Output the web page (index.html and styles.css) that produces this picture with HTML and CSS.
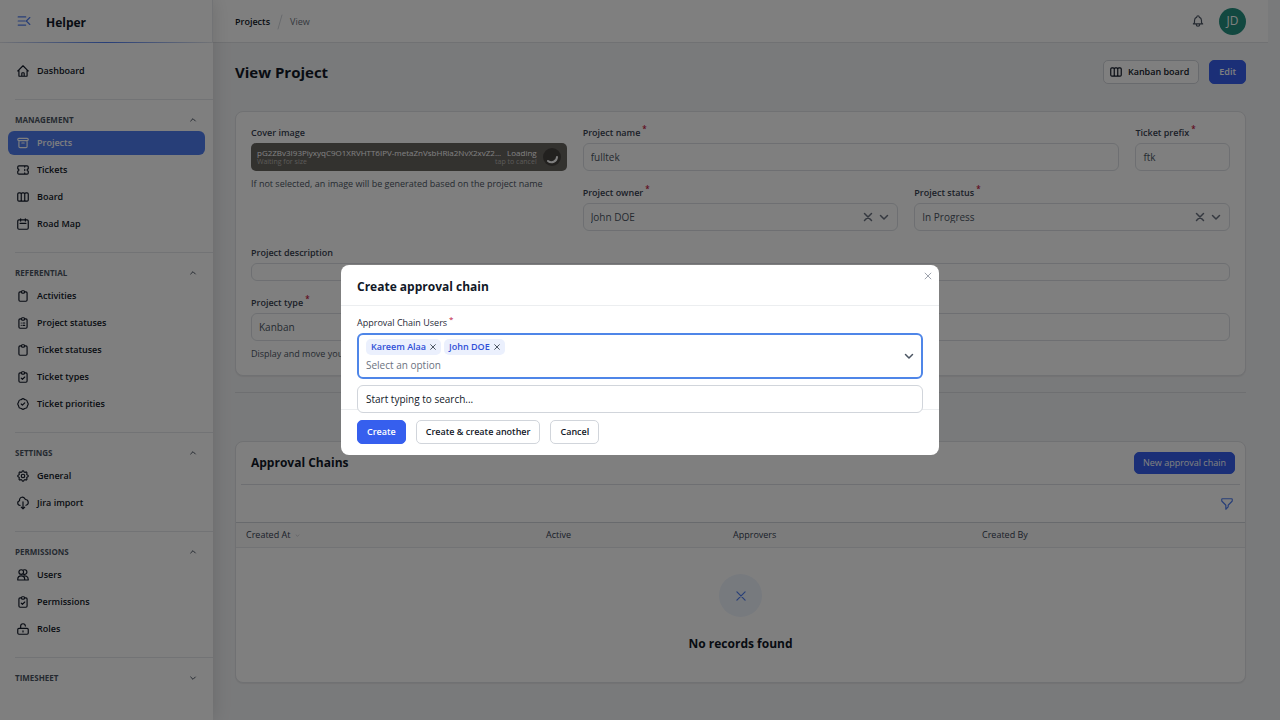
FILE: index.html
```html
<!DOCTYPE html>
<html lang="en">
<head>
<meta charset="utf-8">
<title>View Project - Helper</title>
<link rel="stylesheet" href="styles.css">
</head>
<body>
<svg class="sprite" aria-hidden="true">
  <symbol id="home" viewBox="0 0 24 24"><path d="M3 12l2-2m0 0l7-7 7 7M5 10v10a1 1 0 001 1h3m10-11l2 2m-2-2v10a1 1 0 01-1 1h-3m-6 0a1 1 0 001-1v-4a1 1 0 011-1h2a1 1 0 011 1v4a1 1 0 001 1m-6 0h6"/></symbol>
  <symbol id="archive" viewBox="0 0 24 24"><path d="M5 8h14M5 8a2 2 0 110-4h14a2 2 0 110 4M5 8v10a2 2 0 002 2h10a2 2 0 002-2V8m-9 4h4"/></symbol>
  <symbol id="ticket" viewBox="0 0 24 24"><path d="M15 5v2m0 4v2m0 4v2M5 5a2 2 0 00-2 2v3a2 2 0 110 4v3a2 2 0 002 2h14a2 2 0 002-2v-3a2 2 0 110-4V7a2 2 0 00-2-2H5z"/></symbol>
  <symbol id="board" viewBox="0 0 24 24"><path d="M9 17V7m0 10a2 2 0 01-2 2H5a2 2 0 01-2-2V7a2 2 0 012-2h2a2 2 0 012 2m0 10a2 2 0 002 2h2a2 2 0 002-2M9 7a2 2 0 012-2h2a2 2 0 012 2m0 10V7m0 10a2 2 0 002 2h2a2 2 0 002-2V7a2 2 0 00-2-2h-2a2 2 0 00-2 2"/></symbol>
  <symbol id="calendar" viewBox="0 0 24 24"><path d="M8 7V3m8 4V3m-9 8h10M5 21h14a2 2 0 002-2V7a2 2 0 00-2-2H5a2 2 0 00-2 2v12a2 2 0 002 2z"/></symbol>
  <symbol id="clip" viewBox="0 0 24 24"><path d="M9 5H7a2 2 0 00-2 2v12a2 2 0 002 2h10a2 2 0 002-2V7a2 2 0 00-2-2h-2M9 5a2 2 0 002 2h2a2 2 0 002-2M9 5a2 2 0 012-2h2a2 2 0 012 2"/></symbol>
  <symbol id="cliplist" viewBox="0 0 24 24"><path d="M9 5H7a2 2 0 00-2 2v12a2 2 0 002 2h10a2 2 0 002-2V7a2 2 0 00-2-2h-2M9 5a2 2 0 002 2h2a2 2 0 002-2M9 5a2 2 0 012-2h2a2 2 0 012 2m-3 7h3m-3 4h3m-6-4h.01M9 16h.01"/></symbol>
  <symbol id="clipcheck" viewBox="0 0 24 24"><path d="M9 5H7a2 2 0 00-2 2v12a2 2 0 002 2h10a2 2 0 002-2V7a2 2 0 00-2-2h-2M9 5a2 2 0 002 2h2a2 2 0 002-2M9 5a2 2 0 012-2h2a2 2 0 012 2m-6 9l2 2 4-4"/></symbol>
  <symbol id="badge" viewBox="0 0 24 24"><path d="M9 12l2 2 4-4"/><path d="M7.835 4.697a3.42 3.42 0 001.946-.806 3.42 3.42 0 014.438 0 3.42 3.42 0 001.946.806 3.42 3.42 0 013.138 3.138 3.42 3.42 0 00.806 1.946 3.42 3.42 0 010 4.438 3.42 3.42 0 00-.806 1.946 3.42 3.42 0 01-3.138 3.138 3.42 3.42 0 00-1.946.806 3.42 3.42 0 01-4.438 0 3.42 3.42 0 00-1.946-.806 3.42 3.42 0 01-3.138-3.138 3.42 3.42 0 00-.806-1.946 3.42 3.42 0 010-4.438 3.42 3.42 0 00.806-1.946 3.42 3.42 0 013.138-3.138z"/></symbol>
  <symbol id="cog" viewBox="0 0 24 24"><path d="M10.325 4.317c.426-1.756 2.924-1.756 3.35 0a1.724 1.724 0 002.573 1.066c1.543-.94 3.31.826 2.37 2.37a1.724 1.724 0 001.065 2.572c1.756.426 1.756 2.924 0 3.35a1.724 1.724 0 00-1.066 2.573c.94 1.543-.826 3.31-2.37 2.37a1.724 1.724 0 00-2.572 1.065c-.426 1.756-2.924 1.756-3.35 0a1.724 1.724 0 00-2.573-1.066c-1.543.94-3.31-.826-2.37-2.37a1.724 1.724 0 00-1.065-2.572c-1.756-.426-1.756-2.924 0-3.35a1.724 1.724 0 001.066-2.573c-.94-1.543.826-3.31 2.37-2.37.996.608 2.296.07 2.572-1.065z"/><path d="M15 12a3 3 0 11-6 0 3 3 0 016 0z"/></symbol>
  <symbol id="cloud" viewBox="0 0 24 24"><path d="M7 16a4 4 0 01-.88-7.903A5 5 0 1115.900 6L16 6a5 5 0 011 9.900M9 19l3 3m0 0l3-3m-3 3V10"/></symbol>
  <symbol id="users" viewBox="0 0 24 24"><circle cx="9" cy="7" r="4"/><path d="M13 3.400a4 4 0 110 7.200M3 20.500v-1a6 6 0 0112 0v1zM15 20.500h6v-1a6 6 0 00-9-5.200"/></symbol>
  <symbol id="lock" viewBox="0 0 24 24"><path d="M8 11V7a4 4 0 018 0M5 21h14a2 2 0 002-2v-6a2 2 0 00-2-2H5a2 2 0 00-2 2v6a2 2 0 002 2zM12 15v2"/></symbol>
  <symbol id="bell" viewBox="0 0 24 24"><path d="M15 17h5l-1.405-1.405A2.032 2.032 0 0118 14.158V11a6.002 6.002 0 00-4-5.659V5a2 2 0 10-4 0v.341C7.670 6.165 6 8.388 6 11v3.159c0 .538-.214 1.055-.595 1.436L4 17h5m6 0v1a3 3 0 11-6 0v-1m6 0H9"/></symbol>
  <symbol id="filter" viewBox="0 0 24 24"><path d="M3 4a1 1 0 011-1h16a1 1 0 011 1v2.586a1 1 0 01-.293.707l-6.414 6.414a1 1 0 00-.293.707V17l-4 4v-6.586a1 1 0 00-.293-.707L3.293 7.293A1 1 0 013 6.586V4z"/></symbol>
  <symbol id="up" viewBox="0 0 24 24"><path d="M5 15l7-7 7 7"/></symbol>
  <symbol id="down" viewBox="0 0 24 24"><path d="M5 9l7 7 7-7"/></symbol>
  <symbol id="x" viewBox="0 0 24 24"><path d="M5 5l14 14M19 5L5 19"/></symbol>
  <symbol id="collapse" viewBox="0 0 24 24"><path d="M2 5h13M2 12h12M2 19h13M22 6l-6 6 6 6"/></symbol>
</svg>

<div class="app">
  <aside class="sidebar">
    <div class="brand">
      <button class="icon-btn blue" aria-label="Collapse sidebar"><svg class="i14"><use href="#collapse"/></svg></button>
      <a class="logo" href="#">Helper</a>
    </div>
    <nav class="nav">
      <ul class="items">
        <li><a class="item" href="#"><svg class="i14"><use href="#home"/></svg>Dashboard</a></li>
      </ul>
      <section class="group">
        <button class="group-head">Management<svg class="i8"><use href="#up"/></svg></button>
        <ul class="items">
          <li><a class="item active" href="#"><svg class="i14"><use href="#archive"/></svg>Projects</a></li>
          <li><a class="item" href="#"><svg class="i14"><use href="#ticket"/></svg>Tickets</a></li>
          <li><a class="item" href="#"><svg class="i14"><use href="#board"/></svg>Board</a></li>
          <li><a class="item" href="#"><svg class="i14"><use href="#calendar"/></svg>Road Map</a></li>
        </ul>
      </section>
      <section class="group">
        <button class="group-head">Referential<svg class="i8"><use href="#up"/></svg></button>
        <ul class="items">
          <li><a class="item" href="#"><svg class="i14"><use href="#clip"/></svg>Activities</a></li>
          <li><a class="item" href="#"><svg class="i14"><use href="#cliplist"/></svg>Project statuses</a></li>
          <li><a class="item" href="#"><svg class="i14"><use href="#clip"/></svg>Ticket statuses</a></li>
          <li><a class="item" href="#"><svg class="i14"><use href="#clipcheck"/></svg>Ticket types</a></li>
          <li><a class="item" href="#"><svg class="i14"><use href="#badge"/></svg>Ticket priorities</a></li>
        </ul>
      </section>
      <section class="group">
        <button class="group-head">Settings<svg class="i8"><use href="#up"/></svg></button>
        <ul class="items">
          <li><a class="item" href="#"><svg class="i14"><use href="#cog"/></svg>General</a></li>
          <li><a class="item" href="#"><svg class="i14"><use href="#cloud"/></svg>Jira import</a></li>
        </ul>
      </section>
      <section class="group">
        <button class="group-head">Permissions<svg class="i8"><use href="#up"/></svg></button>
        <ul class="items">
          <li><a class="item" href="#"><svg class="i14"><use href="#users"/></svg>Users</a></li>
          <li><a class="item" href="#"><svg class="i14"><use href="#clipcheck"/></svg>Permissions</a></li>
          <li><a class="item" href="#"><svg class="i14"><use href="#lock"/></svg>Roles</a></li>
        </ul>
      </section>
      <section class="group">
        <button class="group-head">Timesheet<svg class="i8"><use href="#down"/></svg></button>
      </section>
    </nav>
  </aside>

  <div class="page">
    <header class="topbar">
      <nav class="crumbs" aria-label="Breadcrumb">
        <a href="#">Projects</a><svg class="slash" viewBox="0 0 6 16"><path d="M1 15L5 1"/></svg><span>View</span>
      </nav>
      <div class="account">
        <button class="icon-btn grey" aria-label="Notifications"><svg class="i14"><use href="#bell"/></svg></button>
        <button class="avatar">JD</button>
      </div>
    </header>

    <main class="content">
      <div class="title-row">
        <h1>View Project</h1>
        <div class="actions">
          <button class="btn light"><svg class="i14"><use href="#board"/></svg>Kanban board</button>
          <button class="btn primary">Edit</button>
        </div>
      </div>

      <form class="card form">
        <div class="field">
          <label for="cover">Cover image</label>
          <div class="upload">
            <div class="file"><span class="file-name">pG2ZBv3I93PiyxyqC9O1XRVHTT6IPV-metaZnVsbHRla2NvX2xvZ2...</span><small>Waiting for size</small></div>
            <div class="file-state"><span>Loading</span><small>tap to cancel</small></div>
            <button type="button" id="cover" class="spinner" aria-label="Cancel upload"><svg viewBox="0 0 18 18"><path d="M14 9A5.500 5.500 0 0 1 5 13"/></svg></button>
          </div>
          <p class="hint">If not selected, an image will be generated based on the project name</p>
        </div>
        <div class="details">
          <div class="field w10">
            <label for="name">Project name<sup>*</sup></label>
            <input id="name" class="control" value="fulltek">
          </div>
          <div class="field w2">
            <label for="prefix">Ticket prefix<sup>*</sup></label>
            <input id="prefix" class="control" value="ftk">
          </div>
          <div class="field w6">
            <label for="owner">Project owner<sup>*</sup></label>
            <div class="select">
              <select id="owner" class="control"><option>John DOE</option></select>
              <span class="marks"><svg class="i12"><use href="#x"/></svg><svg class="i12"><use href="#down"/></svg></span>
            </div>
          </div>
          <div class="field w6">
            <label for="status">Project status<sup>*</sup></label>
            <div class="select">
              <select id="status" class="control"><option>In Progress</option></select>
              <span class="marks"><svg class="i12"><use href="#x"/></svg><svg class="i12"><use href="#down"/></svg></span>
            </div>
          </div>
        </div>
        <div class="field wide">
          <label for="desc">Project description</label>
          <textarea id="desc" class="control editor" rows="1"></textarea>
        </div>
        <div class="field wide">
          <label for="type">Project type<sup>*</sup></label>
          <select id="type" class="control"><option>Kanban</option></select>
          <p class="hint">Display and move your</p>
        </div>
      </form>

      <hr class="divider">

      <section class="card chains">
        <div class="chains-head">
          <h2>Approval Chains</h2>
          <button class="btn primary small">New approval chain</button>
        </div>
        <div class="tools"><button class="icon-btn blue" aria-label="Filter"><svg class="i14"><use href="#filter"/></svg></button></div>
        <table>
          <colgroup><col class="c1"><col class="c2"><col class="c3"><col></colgroup>
          <thead><tr><th>Created At<svg class="sort"><use href="#down"/></svg></th><th>Active</th><th>Approvers</th><th>Created By</th></tr></thead>
        </table>
        <div class="empty">
          <span class="empty-icon"><svg class="i14"><use href="#x"/></svg></span>
          <h2>No records found</h2>
        </div>
      </section>
    </main>
  </div>
</div>

<div class="overlay">
  <div class="modal" role="dialog" aria-labelledby="modal-title">
    <button class="close" aria-label="Close"><svg class="i10"><use href="#x"/></svg></button>
    <h2 id="modal-title" class="modal-head">Create approval chain</h2>
    <div class="modal-body">
      <label for="users-input">Approval Chain Users<sup>*</sup></label>
      <div class="multi">
        <div class="tags">
          <span class="tag">Kareem Alaa<button aria-label="Remove Kareem Alaa"><svg class="i8"><use href="#x"/></svg></button></span>
          <span class="tag">John DOE<button aria-label="Remove John DOE"><svg class="i8"><use href="#x"/></svg></button></span>
        </div>
        <input id="users-input" placeholder="Select an option">
        <svg class="chev"><use href="#down"/></svg>
        <div class="menu">Start typing to search...</div>
      </div>
    </div>
    <div class="modal-foot">
      <button class="btn primary">Create</button>
      <button class="btn light">Create &amp; create another</button>
      <button class="btn light">Cancel</button>
    </div>
  </div>
</div>
</body>
</html>
```

FILE: styles.css
```css
* { box-sizing: border-box; }
body { margin: 0; background: #f3f4f6; color: #111827; font: 400 9px/12px "Open Sans", "Noto Sans", sans-serif; overflow: hidden; }
h1, h2, p, ul { margin: 0; padding: 0; }
ul { list-style: none; }
a { color: inherit; text-decoration: none; }
button, input, select, textarea { font: inherit; color: inherit; }
button { padding: 0; border: 0; background: none; }
svg { flex: none; fill: none; stroke: currentColor; stroke-width: 2; stroke-linecap: round; stroke-linejoin: round; }
.sprite { position: absolute; width: 0; height: 0; }
.i8 { width: 8px; height: 8px; stroke-width: 3; }
.i10 { width: 10px; height: 10px; }
.i12 { width: 12px; height: 12px; stroke-width: 3; }
.i14 { width: 14px; height: 14px; }
.icon-btn { display: flex; }
.blue { color: #4f7df0; }
.grey { color: #4b5563; }

.app { display: flex; height: 100vh; padding-right: 12px; }
.sidebar { flex: 0 0 213px; background: #fff; box-shadow: 0 0 18px rgba(0, 0, 0, .14); z-index: 1; overflow: hidden; }
.brand { display: flex; align-items: center; gap: 15px; height: 43px; padding: 0 17px; border-bottom: 1px solid; border-image: linear-gradient(90deg, #e5e7eb, #4f7df0 50%, #e5e7eb) 1; border-right: 1px solid #e5e7eb; }
.logo { padding-top: 3px; font-size: 12px; font-weight: 700; line-height: 18px; }
.nav { padding-top: 16px; }
.items { display: grid; gap: 3px; padding: 0 8px; }
.item { display: flex; align-items: center; gap: 7px; height: 24px; padding: 0 8px; border-radius: 6px; font-weight: 600; }
.active { background: #4f7df0; color: #fff; }
.group { margin: 16px 0 0 15px; padding-top: 10px; border-top: 1px solid #e5e7eb; }
.group-head { display: flex; justify-content: space-between; align-items: center; width: 100%; height: 20px; padding: 0 16px 0 0; color: #4b5563; font-size: 8px; font-weight: 700; text-transform: uppercase; }
.group .items { margin: 1px 0 0 -15px; }

.page { flex: 1; min-width: 0; }
.topbar { display: flex; justify-content: space-between; align-items: center; height: 43px; padding: 0 22px; background: #fff; border-bottom: 1px solid #e0e2e6; }
.crumbs { display: flex; align-items: center; gap: 7px; padding-top: 1px; font-weight: 600; }
.crumbs span { color: #6b7280; font-weight: 400; }
.slash { width: 6px; height: 16px; stroke: #d1d5db; stroke-width: 1; }
.account { display: flex; align-items: center; gap: 14px; }
.avatar { width: 27px; height: 27px; border-radius: 50%; background: #249080; color: #fff; font-size: 12px; }
.content { padding: 17px 22px 0; }
.title-row { display: flex; justify-content: space-between; align-items: center; margin-bottom: 27px; }
h1 { font-size: 15px; line-height: 24px; font-weight: 700; }
h2 { font-size: 12px; line-height: 18px; font-weight: 700; }
.actions, .modal-foot { display: flex; gap: 10px; }
.btn { display: flex; align-items: center; gap: 5px; height: 24px; padding: 0 9px; border: 1px solid #d1d5db; border-radius: 5px; background: #fff; font-weight: 600; white-space: nowrap; }
.btn svg { margin-left: -4px; }
.primary { background: #365fee; border-color: #365fee; color: #fff; }
.small { height: 22px; padding: 0 8px; font-weight: 400; }
.card { background: #fff; border: 1px solid #e0e2e6; border-radius: 8px; box-shadow: 0 1px 1px rgba(0, 0, 0, .06); }

.form { display: grid; grid-template-columns: repeat(3, minmax(0, 1fr)); gap: 16px; padding: 15px; }
.details { grid-column: span 2; display: grid; grid-template-columns: repeat(12, minmax(0, 1fr)); gap: 16px; }
.w10 { grid-column: span 10; }
.w2 { grid-column: span 2; }
.w6 { grid-column: span 6; }
.wide { grid-column: 1 / -1; }
.field { display: flex; flex-direction: column; gap: 4px; }
label { font-weight: 600; color: #374151; line-height: 12px; }
sup { margin-left: 2px; color: #be123c; font-size: 8px; line-height: 0; }
.control { width: 100%; height: 28px; margin: 0; padding: 0 7px; border: 1px solid #dcdfe4; border-radius: 6px; background: #fff; color: #4b5563; font-size: 10px; appearance: none; outline: 0; }
.editor { height: 18px; resize: none; }
.select { position: relative; }
.marks { position: absolute; right: 8px; top: 8px; display: flex; gap: 4px; color: #6b7280; }
.hint { margin-top: 3px; color: #4b5563; line-height: 12px; }
.upload { display: flex; align-items: center; gap: 6px; height: 28px; padding: 0 6px; border-radius: 5px; background: #67645f; color: #fff; font-size: 8px; line-height: 10px; }
.file { flex: 1; min-width: 0; }
.file-name { display: block; white-space: nowrap; }
.upload small { display: block; color: #b8b6b2; font-size: 7px; line-height: 8px; }
.file-state { text-align: right; }
.spinner { width: 18px; height: 18px; border-radius: 50%; background: #45423f; color: #fff; }
.spinner svg { display: block; width: 18px; height: 18px; }

.divider { margin: 16px 0 48px; border: 0; border-top: 1px solid #dcdee2; }
.chains-head { display: flex; justify-content: space-between; align-items: center; margin: 0 5px; padding: 10px 5px 10px 10px; border-bottom: 1px solid #dcdfe4; }
.tools { display: flex; justify-content: flex-end; padding: 12px 11px 11px; }
table { width: 100%; table-layout: fixed; border-collapse: collapse; }
th { height: 25px; padding: 0 10px; background: #f8f8f9; border-top: 1px solid #d1d5db; border-bottom: 1px solid #e5e7eb; color: #374151; font-weight: 400; text-align: left; }
.c1 { width: 300px; }
.c2 { width: 187px; }
.c3 { width: 249px; }
.sort { width: 5px; height: 5px; margin-left: 5px; opacity: .5; }
.empty { display: flex; flex-direction: column; align-items: center; gap: 18px; padding: 26px 0 29px; }
.empty-icon { display: grid; place-items: center; width: 43px; height: 43px; border-radius: 50%; background: #eef4fd; color: #4f7df0; }

.overlay { position: fixed; inset: 0; z-index: 2; display: flex; align-items: center; justify-content: center; background: rgba(0, 0, 0, .5); }
.modal { position: relative; width: 598px; max-width: 100%; background: #fff; border-radius: 8px; }
.close { position: absolute; top: 6px; right: 6px; color: #8b919c; }
.close svg, .tag svg { display: block; }
.modal-head { padding: 13px 16px 9px; border-bottom: 1px solid #eceef0; }
.modal-body { padding: 11px 16px 30px; }
.modal-body label { display: block; margin-bottom: 4px; font-weight: 400; color: #1f2937; }
.multi { position: relative; padding: 4px 7px 3px; border: 2px solid #4f86e8; border-radius: 6px; }
.tags { display: flex; gap: 3px; }
.tag { display: flex; align-items: center; gap: 3px; height: 16px; padding: 0 4px 0 5px; border-radius: 5px; background: #ebf0fd; color: #2f4fd8; font-weight: 600; }
.tag button { color: #4b5563; }
.multi input { display: block; width: 90%; height: 18px; margin-top: 1px; padding: 0; border: 0; outline: 0; font-size: 10px; }
.multi input::placeholder { color: #6b7280; opacity: 1; }
.chev { position: absolute; right: 6px; top: 15px; width: 12px; height: 12px; color: #4b5563; stroke-width: 3; }
.menu { position: absolute; left: -2px; right: -2px; top: 50px; height: 28px; padding: 0 8px; border: 1px solid #d1d5db; border-radius: 6px; background: #fff; font-size: 10px; line-height: 26px; z-index: 1; }
.modal-foot { padding: 10px 16px 11px; border-top: 1px solid #eceef0; }
```
